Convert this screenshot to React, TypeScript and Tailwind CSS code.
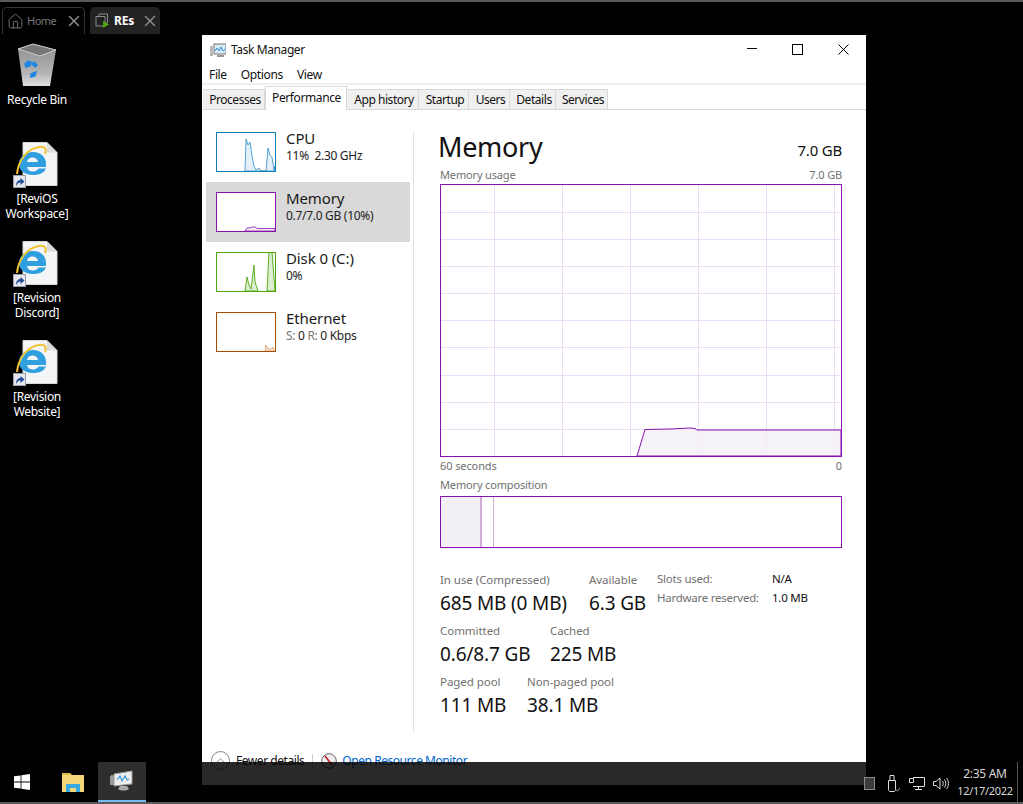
import { ReactNode } from 'react'
import { Home, X, ChevronUp } from 'lucide-react'

const PURPLE = '#8b12ae'

function IeIcon({ top, label }: { top: number; label: string[] }) {
  return (
    <div className="absolute left-0 w-[74px] flex flex-col items-center" style={{ top }}>
      <svg width="45" height="47" viewBox="0 0 45 47" className="-ml-[3px]">
        <path d="M10 .5h24l10 10v33H10z" fill="#f4f5f6" stroke="#d8d8d8" />
        <path d="M34 .5v10h10z" fill="#dcdcdc" />
        <path d="M6 22C6 15 12 10 20 10s13 5 13 12v3H14c.5 3 3 4.5 6 4.5 2.5 0 4.5-1 5.5-3H33c-2 4.5-6.500 6.500-13 6.500C12 33 6 29 6 22z" fill="#2f9fe0" />
        <path d="M14 20h11c-.5-3-2.500-4.500-5.500-4.500S14.500 17 14 20z" fill="#f4f5f6" />
        <path d="M4 32C5 20 13 7 26 5c6-1 8 2 6 7" fill="none" stroke="#f2c230" strokeWidth="2" />
        <rect x="0.500" y="33.500" width="12" height="12" fill="#e6e8ee" stroke="#9aa0aa" />
        <path d="M3 44c0-4 2-6 4.500-6v-2l4 3.500-4 3.500v-2.500c-2 0-3 1-4.500 3.500z" fill="#25509c" />
      </svg>
      <div className="mt-[2px] text-white text-[12px] leading-[15px] text-center tracking-[-0.3px]">
        {label.map((l) => (
          <div key={l}>{l}</div>
        ))}
      </div>
    </div>
  )
}

function Thumb({ color, children }: { color: string; children?: ReactNode }) {
  return (
    <svg width="60" height="40" viewBox="0 0 60 40" className="shrink-0 mt-[10px]">
      {children}
      <rect x="0.5" y="0.5" width="59" height="39" fill="none" stroke={color} />
    </svg>
  )
}

function SideItem({ name, sub, active, thumb }: { name: string; sub: ReactNode; active?: boolean; thumb: ReactNode }) {
  return (
    <div className={`h-[60px] w-[204px] flex items-start pl-[10px] ${active ? 'bg-[#d9d9d9]' : ''}`}>
      {thumb}
      <div className="ml-[10px] pt-[7px]">
        <div className="text-[15px] leading-[19px] text-[#1a1a1a] tracking-[-0.1px]">{name}</div>
        <div className="text-[12px] leading-[16px] text-[#222] tracking-[-0.3px]">{sub}</div>
      </div>
    </div>
  )
}

function Stat({ label, value, width }: { label: string; value: string; width: string }) {
  return (
    <div className={width}>
      <div className="text-[11.5px] leading-[16px] text-[#707070] tracking-[-0.05px]">{label}</div>
      <div className="text-[19px] leading-[24px] mt-[3px] text-[#111] tracking-[-0.15px] whitespace-nowrap">{value}</div>
    </div>
  )
}

export default function App() {
  const tabs = [
    ['Processes', 'w-[62px]'],
    ['Performance', 'w-[82px]'],
    ['App history', 'w-[72px]'],
    ['Startup', 'w-[50px]'],
    ['Users', 'w-[41px]'],
    ['Details', 'w-[46px]'],
    ['Services', 'w-[52px]'],
  ]
  const gridX = [54, 122, 190, 258, 326, 394]
  const gridY = [28, 55, 82, 109, 136, 163, 191, 218, 245]

  return (
    <div className="relative w-[1023px] h-[804px] bg-black overflow-hidden font-['Noto_Sans',sans-serif]">
      <div className="absolute top-0 left-0 right-0 h-[2px] bg-[#5a5a5a]" />
      <div className="absolute bottom-0 left-0 right-0 h-[2px] bg-[#5a5a5a]" />

      {/* browser style tabs on top */}
      <div className="absolute left-[2px] top-[7px] flex gap-[5px]">
        <div className="w-[83px] h-[27px] rounded-t-[5px] border border-b-0 border-[#333] flex items-center pl-[4px] text-[#777] text-[11px]">
          <Home size={17} strokeWidth={1.3} />
          <span className="ml-[3px] tracking-[-0.5px]">Home</span>
          <X size={18} strokeWidth={2} className="ml-auto mr-[1px] text-[#8a8a8a]" />
        </div>
        <div className="w-[70px] h-[27px] rounded-t-[5px] bg-[#222] flex items-center pl-[5px] text-white text-[12px] font-bold">
          <svg width="15" height="15" viewBox="0 0 15 15" className="shrink-0">
            <path d="M4 3.500V1h8.500v9H10M1 3.500h9V13H1z" fill="none" stroke="#8a8a8a" />
            <path d="M8 8l6 3.500L8 15z" fill="#4da60c" />
          </svg>
          <span className="ml-[4px] tracking-[-0.2px]">REs</span>
          <X size={18} strokeWidth={2} className="ml-auto mr-[1px] text-[#8a8a8a]" />
        </div>
      </div>

      {/* desktop icons */}
      <div className="absolute left-0 top-[43px] w-[74px] flex flex-col items-center">
        <svg width="40" height="44" viewBox="0 0 40 44">
          <defs>
            <linearGradient id="bin" x1="0" y1="0" x2="0" y2="1">
              <stop offset="0" stopColor="#8d8d8d" />
              <stop offset="0.7" stopColor="#b5b5b5" />
              <stop offset="1" stopColor="#e0e0e0" />
            </linearGradient>
          </defs>
          <path d="M1 6 16 1l23 6-6 36H6z" fill="url(#bin)" />
          <path d="M1 6 16 1l23 6-16 6z" fill="#777" stroke="#cfcfcf" />
          <path d="M8 21l3-3 3 1-1 4-4 1zM17 19l3 3-2 2-3-3zM14 31l5-2-1 4-4 1z" fill="#1f86e0" stroke="#1f86e0" strokeWidth="1.5" />
        </svg>
        <div className="mt-[5px] text-white text-[12px] leading-[15px] tracking-[-0.3px]">Recycle Bin</div>
      </div>
      <IeIcon top={142} label={['[ReviOS', 'Workspace]']} />
      <IeIcon top={241} label={['[Revision', 'Discord]']} />
      <IeIcon top={340} label={['[Revision', 'Website]']} />

      {/* task manager window */}
      <div className="absolute left-[202px] top-[35px] w-[664px] h-[750px] bg-white text-[#111]">
        <div className="h-[30px] flex items-center pl-[8px] relative">
          <svg width="16" height="16" viewBox="0 0 16 16" className="shrink-0">
            <rect x="0" y="4" width="3" height="10" fill="#b8b8b8" />
            <rect x="4" y="2" width="12" height="10" fill="#d8ecf8" stroke="#777" />
            <path d="M5 9l2-3 2 3 2-4 2 4 2-2" fill="none" stroke="#2f8fd0" />
            <rect x="7" y="13" width="7" height="2" fill="#999" />
          </svg>
          <span className="ml-[5px] text-[12px] tracking-[-0.4px]">Task Manager</span>
          <svg width="10" height="10" viewBox="0 0 10 10" className="absolute left-[545px] top-[9px]">
            <path d="M0 4.500h10" stroke="#000" />
          </svg>
          <svg width="11" height="11" viewBox="0 0 11 11" className="absolute left-[590px] top-[9px]">
            <rect x="0.500" y="0.500" width="10" height="10" fill="none" stroke="#000" />
          </svg>
          <svg width="11" height="11" viewBox="0 0 11 11" className="absolute left-[636px] top-[9px]">
            <path d="M.5.500l10 10M10.500.500l-10 10" stroke="#000" />
          </svg>
        </div>
        <div className="h-[18px] flex items-center gap-[14px] pl-[7px] pt-[2px] text-[12px] tracking-[-0.35px]">
          <span>File</span>
          <span>Options</span>
          <span>View</span>
        </div>
        <div className="h-[2px] bg-[#f0f0f0]" />
        <div className="h-[25px] flex items-end pl-[1px] border-b border-[#d9d9d9]">
          {tabs.map(([t, w]) =>
            t === 'Performance' ? (
              <div key={t} className={`${w} h-[24px] -mb-px bg-white border border-b-0 border-[#d9d9d9] flex justify-center pt-[3px] pl-[1px] text-[12px] leading-[16px] tracking-[-0.4px]`}>
                {t}
              </div>
            ) : (
              <div key={t} className={`${w} h-[20px] bg-[#f0f0f0] border-r border-t border-[#d9d9d9] flex items-center justify-center pl-[3px] text-[12px] tracking-[-0.45px]`}>
                {t}
              </div>
            ),
          )}
        </div>

        <div className="flex h-[641px]">
          <div className="w-[211px] pt-[12px] pl-[4px] shrink-0">
            <SideItem
              name="CPU"
              sub={<span>11%&nbsp; 2.30 GHz</span>}
              thumb={
                <Thumb color="#117dbb">
                  <path d="M29 39 30 7l2 6 2-3 2 14 2 10 2 4 3-2 2 3h5l2-23 2 7 2 2 2 13 1-4v5z" fill="#e5f1f8" stroke="#117dbb" strokeWidth="0.7" />
                </Thumb>
              }
            />
            <SideItem
              active
              name="Memory"
              sub="0.7/7.0 GB (10%)"
              thumb={
                <Thumb color={PURPLE}>
                  <rect x="0.5" y="0.5" width="59" height="39" fill="#fff" />
                  <path d="M29 39l2-3h3l2-1h3l2 1.500h18V39z" fill="#f2f0f4" stroke={PURPLE} strokeWidth="0.8" />
                </Thumb>
              }
            />
            <SideItem
              name="Disk 0 (C:)"
              sub="0%"
              thumb={
                <Thumb color="#4da60c">
                  <path d="M29 39l2-14 2 8 2 4 3-24 1 17 3 9zM51 39l2-39h3l3 39z" fill="#dcedd0" stroke="#4da60c" strokeWidth="0.9" />
                </Thumb>
              }
            />
            <SideItem
              name="Ethernet"
              sub={
                <span>
                  <span className="text-[#777]">S:</span> 0 <span className="text-[#777]">R:</span> 0 Kbps
                </span>
              }
              thumb={
                <Thumb color="#a74f01">
                  <path d="M49 39l1-6 2 4 3 0 2-2 1 4z" fill="#fbe9dc" stroke="#d98a50" strokeWidth="0.7" />
                </Thumb>
              }
            />
          </div>
          <div className="w-px h-[601px] mt-[22px] bg-[#e2e2e2] shrink-0" />

          <div className="ml-[26px] w-[402px] pt-[19px]">
            <div className="flex items-start justify-between">
              <div className="text-[27px] leading-[32px] tracking-[-0.3px] -ml-[2px] mt-[2px]">Memory</div>
              <div className="text-[15px] leading-[20px] mt-[11px] tracking-[-0.2px]">7.0 GB</div>
            </div>
            <div className="flex justify-between text-[11px] leading-[16px] text-[#707070] mt-[4px] tracking-[-0.15px]">
              <span>Memory usage</span>
              <span>7.0 GB</span>
            </div>
            <svg width="402" height="273" viewBox="0 0 402 273" className="mt-[1px] block">
              {gridX.map((x) => (
                <line key={x} x1={x + 0.5} x2={x + 0.5} y1="0" y2="273" stroke="#eadcf4" />
              ))}
              {gridY.map((y) => (
                <line key={y} x1="0" x2="400" y1={y + 0.5} y2={y + 0.5} stroke="#eadcf4" />
              ))}
              <path d="M197 272l8-26.500 25-.5 20-1 5 .5 2 1.500H401V272z" fill="#f3f0f5" fillOpacity="0.8" stroke={PURPLE} />
              <rect x="0.5" y="0.5" width="401" height="272" fill="none" stroke={PURPLE} />
            </svg>
            <div className="flex justify-between text-[11px] leading-[14px] text-[#707070] mt-[2px]">
              <span className="tracking-[-0.1px]">60 seconds</span>
              <span>0</span>
            </div>
            <div className="text-[11px] leading-[16px] text-[#707070] mt-[4px] tracking-[-0.15px]">Memory composition</div>
            <div className="h-[52px] mt-[3px] border border-[#8b12ae] flex">
              <div className="w-[39px] bg-[#f3f0f5]" />
              <div className="w-[2px] bg-[#cfacdc]" />
              <div className="w-[11px]" />
              <div className="w-px bg-[#cfacdc]" />
            </div>

            <div className="flex mt-[24px]">
              <div className="w-[217px] flex flex-col gap-[8px]">
                <div className="flex">
                  <Stat width="w-[149px]" label="In use (Compressed)" value="685 MB (0 MB)" />
                  <Stat width="w-[60px]" label="Available" value="6.3 GB" />
                </div>
                <div className="flex">
                  <Stat width="w-[110px]" label="Committed" value="0.6/8.7 GB" />
                  <Stat width="w-[90px]" label="Cached" value="225 MB" />
                </div>
                <div className="flex">
                  <Stat width="w-[87px]" label="Paged pool" value="111 MB" />
                  <Stat width="w-[100px]" label="Non-paged pool" value="38.1 MB" />
                </div>
              </div>
              <div className="text-[11.5px] leading-[19px] -mt-[3px] tracking-[-0.25px]">
                <div className="flex">
                  <span className="w-[115px] text-[#707070]">Slots used:</span>
                  <span>N/A</span>
                </div>
                <div className="flex">
                  <span className="w-[115px] text-[#707070]">Hardware reserved:</span>
                  <span>1.0 MB</span>
                </div>
              </div>
            </div>
          </div>
        </div>

        <div className="flex items-center pl-[9px] text-[12px] tracking-[-0.45px]">
          <div className="w-[19px] h-[19px] rounded-full border border-[#888] flex items-center justify-center">
            <ChevronUp size={15} strokeWidth={1.2} className="text-[#777]" />
          </div>
          <span className="ml-[6px]">Fewer details</span>
          <div className="w-px h-[14px] bg-[#ccc] ml-[8px]" />
          <svg width="16" height="16" viewBox="0 0 16 16" className="ml-[8px] shrink-0">
            <circle cx="8" cy="8" r="7.3" fill="#eee" stroke="#666" />
            <path d="M4 3l7 9" stroke="#c81e1e" strokeWidth="1.6" />
          </svg>
          <span className="ml-[5px] text-[#0066cc] tracking-[-0.45px]">Open Resource Monitor</span>
        </div>
      </div>

      {/* taskbar, see-through like the real one */}
      <div className="absolute left-[202px] top-[762px] w-[664px] h-[23px] bg-black/[.84]" />
      <div className="absolute left-0 top-[762px] w-[1023px] h-[40px] flex items-center">
        <svg width="16" height="16" viewBox="0 0 16 16" className="ml-[14px] shrink-0">
          <path d="M0 2.300 6.600 1.400V7.600H0zM7.400 1.300 16 0V7.600H7.400zM0 8.400H6.600V14.600L0 13.700zM7.400 8.400H16V16L7.400 14.700z" fill="#fff" />
        </svg>
        <svg width="22" height="20" viewBox="0 0 22 20" className="ml-[32px] shrink-0">
          <path d="M0 1h8l2 2h12v17H0z" fill="#f5d77a" />
          <path d="M0 1h8l1 2H0z" fill="#e8bb50" />
          <path d="M4 12h14v8h-4v-4H8v4H4z" fill="#38a8e0" />
          <rect x="8" y="16" width="6" height="4" fill="#f5d77a" />
        </svg>
        <div className="ml-[14px] w-[48px] h-[40px] bg-[#2e2e2e] border-b-[2px] border-[#76b9ed] flex items-center justify-center shrink-0">
          <svg width="24" height="22" viewBox="0 0 24 22">
            <rect x="0" y="6" width="4" height="9" fill="#999" />
            <rect x="1" y="5" width="2" height="1" fill="#6cc04a" />
            <path d="M4 4 22 1v13L4 16z" fill="#ededed" stroke="#999" />
            <path d="M7 10l3-4 2 5 3-5 2 4 2-1" fill="none" stroke="#3a9ad9" strokeWidth="1.2" />
            <path d="M10 16h7l2 3c-3 2-8 2-11 0z" fill="#aaa" />
          </svg>
        </div>

        <div className="ml-auto flex items-center">
          <div className="w-[11px] h-[13px] bg-[#3c3c3c] border border-[#8a8a8a] mt-[3px]" />
          <svg width="12" height="17" viewBox="0 0 12 17" className="ml-[13px] mt-[3px]" fill="none" stroke="#ddd">
            <path d="M.5 5.500h7v9c0 1-.5 2-1.500 2H2c-1 0-1.500-1-1.500-2zM2 5.500V.5h4v5" />
            <path d="M8 15l1.500 1L12 13" stroke="#999" />
          </svg>
          <svg width="16" height="13" viewBox="0 0 16 13" className="ml-[9px] mt-[3px]" fill="none" stroke="#ddd">
            <path d="M4 .5h11.500v9H4M9.500 9.500v3M6 12.500h7M.5 1.500h4v4h-4z" />
          </svg>
          <svg width="16" height="13" viewBox="0 0 16 13" className="ml-[8px] mt-[3px]" fill="none" stroke="#ddd">
            <path d="M.5 4.500h2.500L7 1v11L3 8.500H.5z" />
            <path d="M9.500 4c1 1.500 1 3.500 0 5M11.500 2.500c1.700 2.500 1.700 5.500 0 8M13.500 1c2.500 3 2.500 8 0 11" />
          </svg>
          <div className="ml-[7px] w-[58px] text-[#d8d8d8] leading-[17px] text-center">
            <div className="text-[12px] tracking-[-0.3px]">2:35 AM</div>
            <div className="text-[11px] tracking-[-0.3px] whitespace-nowrap">12/17/2022</div>
          </div>
          <div className="ml-[3px] w-px h-[40px] bg-[#555]" />
          <div className="w-[5px]" />
        </div>
      </div>
    </div>
  )
}
